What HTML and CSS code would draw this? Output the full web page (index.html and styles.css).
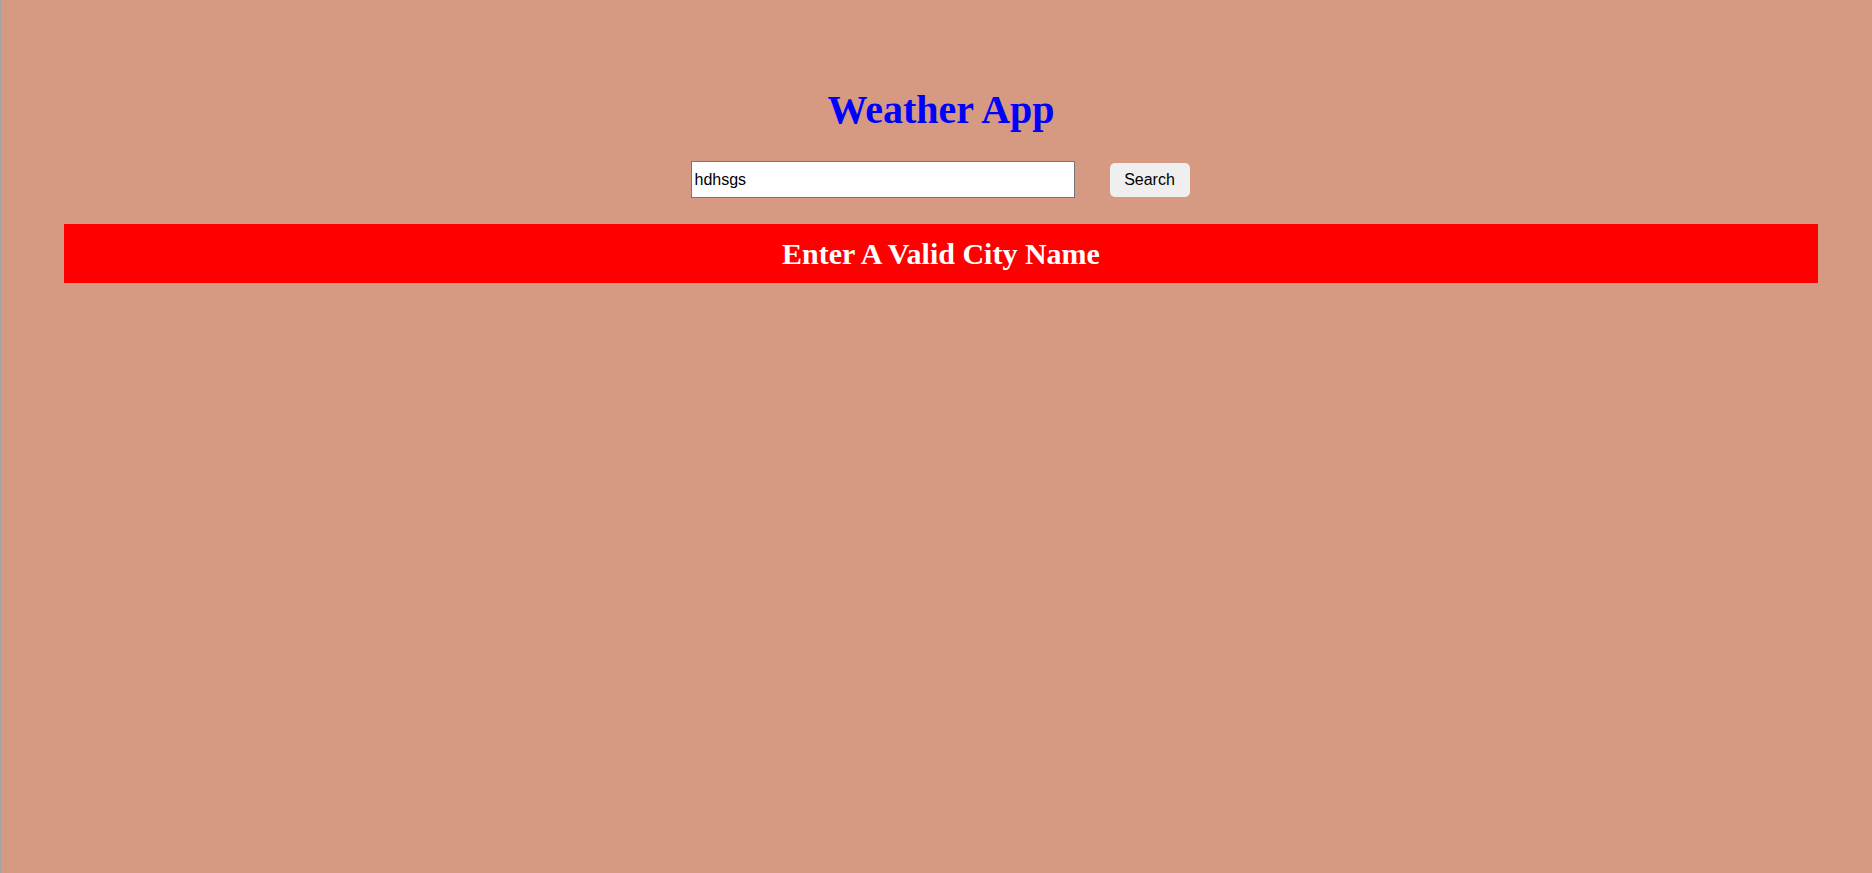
FILE: index.html
```html
<!DOCTYPE html>
<html lang="en">
<head>
<meta charset="utf-8">
<title>Weather App</title>
<link rel="stylesheet" href="styles.css">
</head>
<body>
<div class="app">
  <h1 class="title">Weather App</h1>
  <div class="search">
    <input class="city" type="text" value="hdhsgs">
    <button class="btn" type="button">Search</button>
  </div>
  <h2 class="error">Enter A Valid City Name</h2>
</div>
</body>
</html>
```
FILE: styles.css
```css
html, body {
  margin: 0;
  height: 100%;
}
body {
  background: #d59a81;
  border-left: 1px solid #a3a3a3;
  box-sizing: border-box;
  font-family: "Liberation Serif", "Times New Roman", serif;
}
.app {
  padding-left: 9px;
  display: flex;
  flex-direction: column;
}
.title {
  margin: 0;
  padding-top: 88px;
  font-size: 40px;
  line-height: 44px;
  font-weight: bold;
  color: #0000ff;
  text-align: center;
}
.search {
  margin: 29px 2px 0 0;
  display: flex;
  justify-content: center;
  align-items: center;
  gap: 35px;
}
.city {
  box-sizing: border-box;
  width: 384px;
  height: 37px;
  margin: 0;
  padding: 0 3px;
  border: 1px solid #767676;
  background: #fff;
  font-family: "Liberation Sans", Arial, sans-serif;
  font-size: 16px;
  color: #000;
  outline: none;
}
.btn {
  box-sizing: border-box;
  width: 80px;
  height: 34px;
  margin: 0;
  padding: 0;
  border: none;
  border-radius: 5px;
  background: #efefef;
  font-family: "Liberation Sans", Arial, sans-serif;
  font-size: 16px;
  color: #000;
}
.error {
  margin: 26px 54px 0 54px;
  height: 59px;
  background: #ff0000;
  color: #ffffff;
  font-size: 30px;
  line-height: 59px;
  font-weight: bold;
  text-align: center;
}
```
